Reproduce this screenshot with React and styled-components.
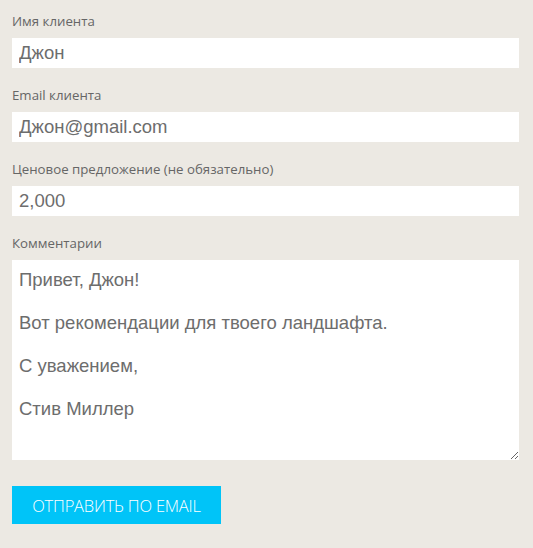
import React from "react";
import styled, { createGlobalStyle } from "styled-components";

const Global = createGlobalStyle`
  html, body { margin: 0; padding: 0; background: #ece9e3; }
  * { box-sizing: border-box; }
`;

const Form = styled.form`
  display: flex;
  flex-direction: column;
  padding: 12px 14px 24px 12px;
  width: 533px;
  min-height: 548px;
  background: #ece9e3;
`;

const Field = styled.div`
  display: flex;
  flex-direction: column;
  gap: 8px;
  margin-bottom: ${(p) => p.$gap ?? 18}px;
`;

const Label = styled.label`
  font-family: "Open Sans", sans-serif;
  font-weight: 400;
  font-size: 13.25px;
  line-height: 18px;
  color: #666;
`;

const Input = styled.input`
  height: 30px;
  width: 100%;
  border: none;
  outline: none;
  background: #fff;
  padding: 0 7px;
  font-family: "Liberation Sans", Arial, sans-serif;
  font-size: 18.5px;
  color: #6d6d6d;
`;

const TextArea = styled.textarea`
  height: 200px;
  width: 100%;
  border: none;
  outline: none;
  background: #fff;
  padding: 9px 7px;
  font-family: "Liberation Sans", Arial, sans-serif;
  font-size: 18.5px;
  line-height: 21.5px;
  color: #6d6d6d;
  resize: vertical;
  display: block;
`;

const Button = styled.button`
  align-self: flex-start;
  width: 209px;
  height: 38px;
  border: none;
  background: #00c4f8;
  color: #fff;
  font-family: "Open Sans", sans-serif;
  font-weight: 300;
  font-size: 16.5px;
  letter-spacing: -0.2px;
  text-transform: uppercase;
  cursor: pointer;
  padding: 0;
`;

export default function App() {
  return (
    <>
      <Global />
      <Form onSubmit={(e) => e.preventDefault()}>
        <Field>
          <Label>Имя клиента</Label>
          <Input defaultValue="Джон" />
        </Field>
        <Field>
          <Label>Email клиента</Label>
          <Input defaultValue="Джон@gmail.com" />
        </Field>
        <Field>
          <Label>Ценовое предложение (не обязательно)</Label>
          <Input defaultValue="2,000" />
        </Field>
        <Field $gap={26}>
          <Label>Комментарии</Label>
          <TextArea
            defaultValue={"Привет, Джон!\n\nВот рекомендации для твоего ландшафта.\n\nС уважением,\n\nСтив Миллер"}
          />
        </Field>
        <Button type="submit">Отправить по email</Button>
      </Form>
    </>
  );
}
